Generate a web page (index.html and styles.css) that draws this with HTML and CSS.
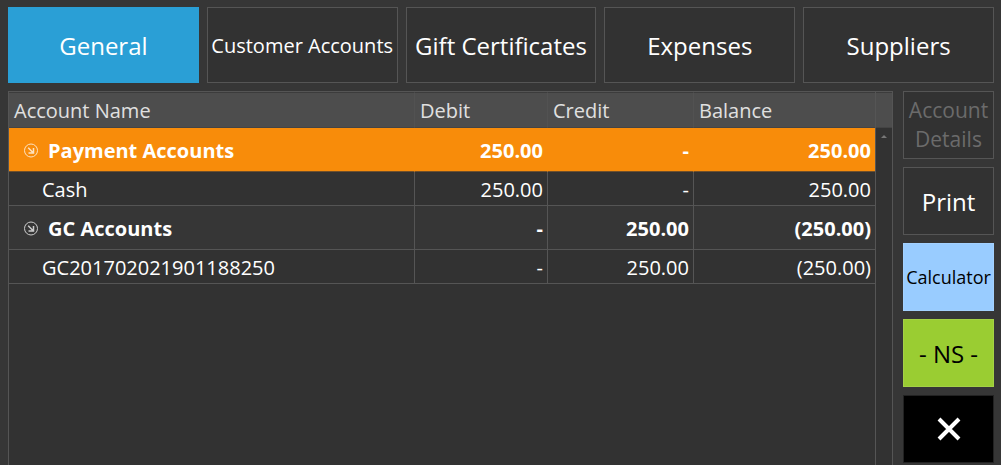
FILE: index.html
```
<!DOCTYPE html>
<html lang="en">
<head>
    <meta charset="UTF-8">
    <meta name="viewport" content="width=device-width, initial-scale=1.0">
    <title>Accounts</title>
    <link rel="stylesheet" href="styles.css">
</head>
<body>
    <nav class="tabs">
        <button type="button" class="btn active">General</button>
        <button type="button" class="btn small">Customer Accounts</button>
        <button type="button" class="btn">Gift Certificates</button>
        <button type="button" class="btn">Expenses</button>
        <button type="button" class="btn">Suppliers</button>
    </nav>
    <main class="main">
        <div class="grid_panel">
            <div class="grid_body">
                <table class="accounts">
                    <colgroup>
                        <col>
                        <col class="col_debit">
                        <col class="col_credit">
                        <col class="col_balance">
                    </colgroup>
                    <thead>
                        <tr>
                            <th>Account Name</th>
                            <th>Debit</th>
                            <th>Credit</th>
                            <th>Balance</th>
                        </tr>
                    </thead>
                    <tbody>
                        <tr class="group selected">
                            <td>
                                <div class="group_name">
                                    <button type="button" class="toggle" aria-label="Collapse Payment Accounts">
                                        <svg width="16" height="16" viewBox="0 0 16 16"><circle cx="8" cy="7.5" r="6.5"/><path d="M5.2 4.7l5 5M10.5 5v5H5.5" stroke-width="1.5"/></svg>
                                    </button>
                                    <span>Payment Accounts</span>
                                </div>
                            </td>
                            <td>250.00</td>
                            <td>-</td>
                            <td>250.00</td>
                        </tr>
                        <tr>
                            <td>Cash</td>
                            <td>250.00</td>
                            <td>-</td>
                            <td>250.00</td>
                        </tr>
                        <tr class="group">
                            <td>
                                <div class="group_name">
                                    <button type="button" class="toggle" aria-label="Collapse GC Accounts">
                                        <svg width="16" height="16" viewBox="0 0 16 16"><circle cx="8" cy="7.5" r="6.5"/><path d="M5.2 4.7l5 5M10.5 5v5H5.5" stroke-width="1.5"/></svg>
                                    </button>
                                    <span>GC Accounts</span>
                                </div>
                            </td>
                            <td>-</td>
                            <td>250.00</td>
                            <td>(250.00)</td>
                        </tr>
                        <tr>
                            <td>GC201702021901188250</td>
                            <td>-</td>
                            <td>250.00</td>
                            <td>(250.00)</td>
                        </tr>
                    </tbody>
                </table>
            </div>
            <div class="scroll">
                <div class="scroll_head"></div>
                <button type="button" class="scroll_up" aria-label="Scroll up">
                    <svg width="6" height="3" viewBox="0 0 6 3"><path d="M0 3L3 0l3 3z"/></svg>
                </button>
            </div>
        </div>
        <aside class="side">
            <button type="button" class="btn medium" disabled>Account Details</button>
            <button type="button" class="btn">Print</button>
            <button type="button" class="btn calc">Calculator</button>
            <button type="button" class="btn ns">- NS -</button>
            <button type="button" class="btn close" aria-label="Close">
                <svg width="24" height="24" viewBox="0 0 24 24"><path d="M2 2l20 20M22 2L2 22"/></svg>
            </button>
        </aside>
    </main>
</body>
</html>
```
FILE: styles.css
```
*{margin: 0; padding: 0; box-sizing: border-box;}
body{min-height: 100vh; display: flex; flex-direction: column; gap: 8px; padding: 7px 7px 0 8px; background-color: #363636; color: #fff; font-family: "Open Sans", "Noto Sans", sans-serif; font-size: 20px;}
button{font-family: inherit; color: inherit; cursor: pointer;}

.btn{display: flex; align-items: center; justify-content: center; width: 100%; height: 68px; border: 1px solid #555; background-color: #323232; font-size: 24px; line-height: 29px;}
.btn.small{font-size: 20px;}
.btn.medium{font-size: 21px;}
.btn:disabled{color: #6b6b6b; cursor: default;}

.tabs{display: grid; grid-template-columns: repeat(5, 1fr); gap: 8px;}
.tabs .btn{height: 76px; white-space: nowrap;}
.tabs .active{background-color: #2a9fd6; border-color: #2a9fd6;}

.main{flex: 1; display: flex; gap: 10px;}
.grid_panel{flex: 1; display: flex; border: 1px solid #555; border-bottom: 0; background-color: #323232;}
.grid_body{flex: 1;}

.accounts{width: 100%; table-layout: fixed; border-collapse: separate; border-spacing: 0; line-height: 24px;}
.col_debit{width: 133px;}
.col_credit{width: 146px;}
.col_balance{width: 181px;}
.accounts th{height: 36px; padding: 2px 5px 0; background-color: #4d4d4d; border-top: 1px solid #3c3c3c; border-bottom: 1px solid #444; border-right: 1px solid #525252; color: #e0e0e0; font-weight: normal; text-align: left;}
.accounts td{height: 34px; padding: 2px 4px 0; border-right: 1px solid #555; border-bottom: 1px solid #555; text-align: right; white-space: nowrap;}
.accounts td:first-child{padding-left: 33px; text-align: left;}
.accounts th:last-child, .accounts td:last-child{border-right: 0;}
.accounts .group td{height: 44px; background-color: #363636; font-weight: bold;}
.accounts .group td:first-child{padding-left: 14px;}
.accounts .selected td{background-color: #f88c0a; border-right-color: #f88c0a; border-bottom-color: #70502c;}
.group_name{display: flex; align-items: center; gap: 9px;}
.toggle{width: 16px; height: 20px; background: none; border: 0;}
.toggle svg{display: block; fill: none; stroke: #fff; stroke-width: 1; opacity: 0.75;}

.scroll{width: 17px; border-left: 1px solid #555;}
.scroll_head{height: 36px; background-color: #4d4d4d; border-top: 1px solid #3c3c3c; border-bottom: 1px solid #444;}
.scroll_up{display: flex; align-items: center; justify-content: center; width: 100%; height: 17px; background: none; border: 0;}
.scroll_up svg{fill: #777;}

.side{width: 91px; display: flex; flex-direction: column; gap: 8px;}
.side .calc{background-color: #99ccff; border-color: #a3d1ff; color: #000; font-size: 18px;}
.side .ns{background-color: #9acd32; border-color: #a4d246; color: #000;}
.side .close{background-color: #000; border-color: #222;}
.close svg{fill: none; stroke: #fff; stroke-width: 4;}
```
